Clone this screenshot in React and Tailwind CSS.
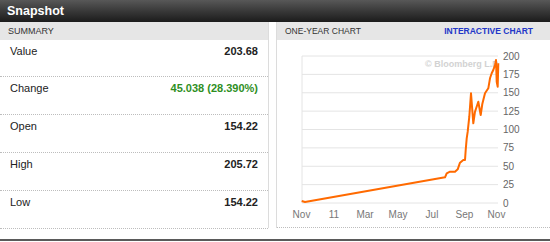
export default function App() {
  const rows = [
    ['Value', '203.68', 'text-[#222]', 'h-[37px]'],
    ['Change', '45.038 (28.390%)', 'text-[#2f8f1f]', 'h-[38px]'],
    ['Open', '154.22', 'text-[#222]', 'h-[38px]'],
    ['High', '205.72', 'text-[#222]', 'h-[38px]'],
    ['Low', '154.22', 'text-[#222]', 'h-[38px]'],
  ]

  // y positions of the gridlines, 0..200 by 25
  const grid = [0, 25, 50, 75, 100, 125, 150, 175, 200].map(v => [v, 203 - v * 0.735])
  const months = [['Nov', 301.5], ['11', 334], ['Mar', 365], ['May', 398], ['Jul', 432], ['Sep', 464.5], ['Nov', 496.5]]
  const line = '301.7,201 305,202 445,177.3 446.7,173.3 450,171.7 455,171.7 457.7,169.3 460,162.7 463.3,160 465,160 465.7,150 466.7,138.3 467.7,131.7 469.3,116.7 471,93.3 473.3,123.3 475,111.7 478.3,101.7 480.7,115 482.3,104 485,93.3 488.3,88.3 490,78.3 491.7,73.3 493.3,70 495,65 496,60 496.7,81.7 497.7,86.7 498.3,63.3'

  return (
    <div className="w-[550px] h-[242px] bg-white overflow-hidden font-['Liberation_Sans',Arial,sans-serif]">
      {/* Title bar */}
      <div className="h-[22px] bg-linear-to-b from-[#585858] to-[#1c1c1c] pl-[7px] flex items-center">
        <span className="text-white font-bold text-[12.5px] leading-none">Snapshot</span>
      </div>

      <div className="flex h-[206px]">
        {/* Summary */}
        <div className="w-[269px] border-r border-[#dcdcdc]">
          <div className="h-[18px] bg-[#e6e6e6] pl-[8px] pt-[1px] flex items-center text-[9px] text-[#333]">SUMMARY</div>
          {rows.map(([label, value, color, h]) => (
            <div key={label} className={`${h} border-b border-dotted border-[#bdbdbd] flex justify-between px-[10px] pt-[4px] text-[11px] leading-[14px]`}>
              <span className="text-[#222]">{label}</span>
              <span className={`font-bold ${color}`}>{value}</span>
            </div>
          ))}
        </div>

        {/* Chart */}
        <div className="ml-[7px] flex-1 border-l border-[#dcdcdc] flex flex-col">
          <div className="h-[18px] bg-[#e6e6e6] pl-[8px] pr-[17px] pt-[1px] flex items-center justify-between text-[8.5px]">
            <span className="text-[#333]">ONE-YEAR CHART</span>
            <span className="font-bold text-[#2236c8]">INTERACTIVE CHART</span>
          </div>
          <div className="h-[188px] border-b border-dotted border-[#bdbdbd]">
            <svg width="273" height="187" viewBox="277 40 273 187" className="block">
              <defs>
                <clipPath id="plot">
                  <rect x="302" y="55" width="196" height="149" />
                </clipPath>
              </defs>
              {grid.map(([v, y]) => (
                <g key={v}>
                  <line x1="302" x2="498" y1={y} y2={y} stroke="#e4e4e4" strokeWidth="1" />
                  <text x="503" y={y + 3.5} fontSize="10" fill="#666" fontFamily="Liberation Sans, Arial, sans-serif">{v}</text>
                </g>
              ))}
              <line x1="302" x2="302" y1="56" y2="203" stroke="#e4e4e4" strokeWidth="1" />
              <text x="425" y="67" fontSize="9" fontWeight="bold" fill="#d2d2d2" clipPath="url(#plot)" fontFamily="Liberation Sans, Arial, sans-serif">© Bloomberg L.P.</text>
              {months.map(([m, x], i) => (
                <text key={i} x={x} y="217.5" fontSize="10" fill="#777" textAnchor="middle" fontFamily="Liberation Sans, Arial, sans-serif">{m}</text>
              ))}
              <polyline points={line} fill="none" stroke="#ff6a00" strokeWidth="2" strokeLinejoin="round" />
            </svg>
          </div>
        </div>
      </div>

      <div className="mt-[11px] h-[2px] bg-[#5a5a5a]" />
    </div>
  )
}
